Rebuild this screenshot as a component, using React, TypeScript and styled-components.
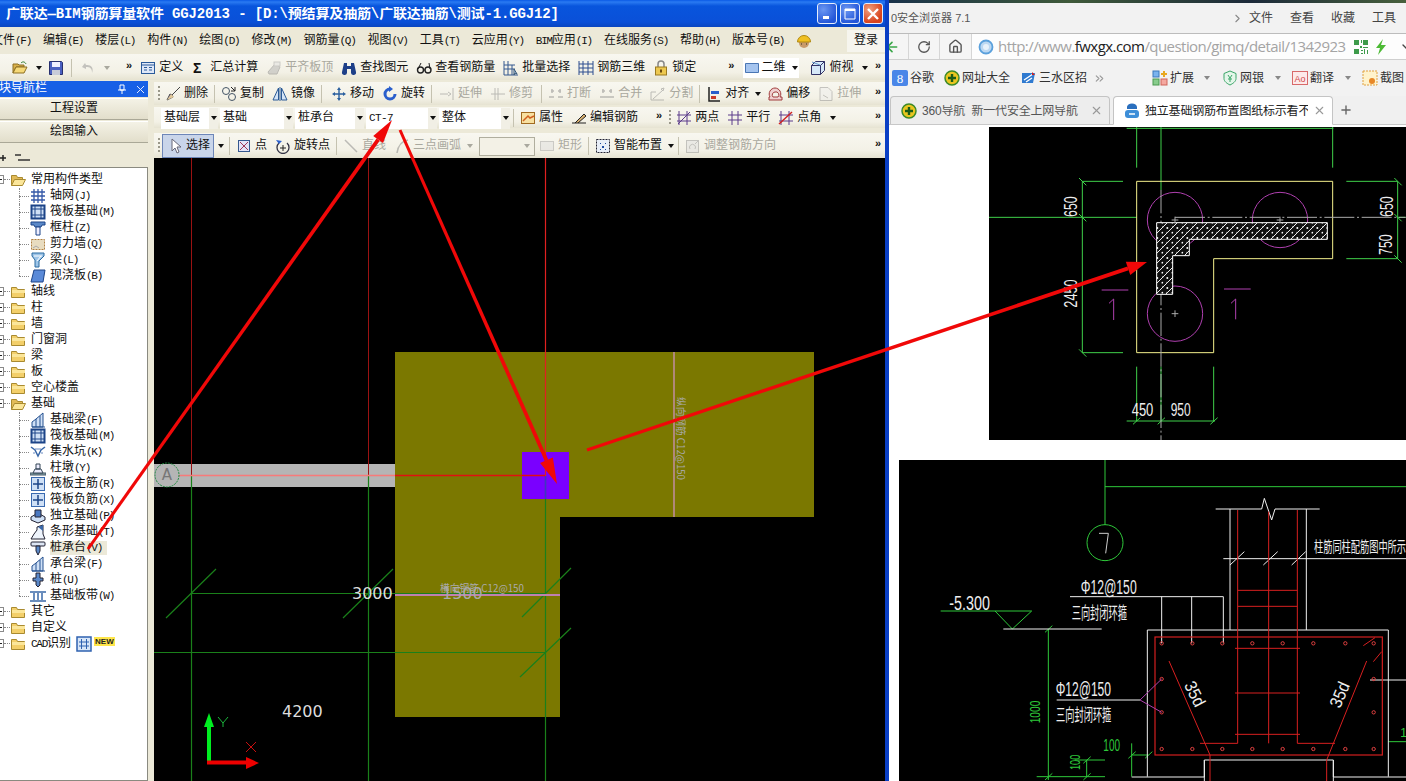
import React, { ReactNode } from "react";
import styled, { createGlobalStyle } from "styled-components";
import { ArrowLeft, RotateCw, House, ChevronDown, ChevronRight, ChevronsRight, X, Plus } from "lucide-react";

const Global = createGlobalStyle`
  html, body { margin: 0; padding: 0; overflow: hidden; background: #fff; }
  * { box-sizing: border-box; }
`;

const legacy = `"Liberation Mono", "Noto Sans CJK SC", monospace`;
const cjk = `"Liberation Sans", "Noto Sans CJK SC", sans-serif`;

const Desktop = styled.div`
  position: relative; width: 1406px; height: 781px; display: flex; overflow: hidden;
`;

/* ------- legacy window -------- */
const Win = styled.div`
  width: 889px; height: 781px; display: flex; flex-direction: column; flex: none;
  background: #ece9d8; border-right: 4px solid #0a3fc4; font: 12px/1 ${legacy}; color: #111; overflow: hidden;
`;
const TitleBar = styled.div`
  height: 27px; flex: none; display: flex; align-items: center; padding: 0 1px 0 6px;
  background: linear-gradient(#0a5ae6 0, #2a7af2 2px, #0855dd 6px, #0a50d8 22px, #0a46c0 100%);
`;
const TitleText = styled.div`
  flex: 1; color: #fff; font-size: 14px; font-weight: 700; letter-spacing: -0.14px; white-space: pre; overflow: hidden;
`;
const WinBtns = styled.div`display: flex; gap: 3px; margin-right: 1px;`;
const WinBtn = styled.div<{ $red?: boolean }>`
  width: 20px; height: 21px; border: 1px solid #e6eefc; border-radius: 3px;
  background: ${p => (p.$red ? "radial-gradient(circle at 30% 30%, #f0a080, #d8431c 70%)" : "radial-gradient(circle at 30% 30%, #6b97f2, #2356d8 75%)")};
  display: flex; align-items: center; justify-content: center;
`;
const MenuBar = styled.div`
  height: 27px; flex: none; display: flex; align-items: center; gap: 12px; margin-left: -9px; padding-top: 1px; background: #ece9d8;
`;
const MenuItem = styled.div`white-space: nowrap; display: flex; align-items: center;`;
const K = styled.span`font-size: 11px; letter-spacing: -1.25px;`;
const LoginBox = styled.div`
  margin-left: auto; width: 38px; height: 22px; background: #f6f5ee; display: flex; align-items: center; justify-content: center;
`;
const Bar = styled.div<{ $h: number; $mt?: number }>`
  height: ${p => p.$h}px; margin-top: ${p => p.$mt ?? 0}px; flex: none; display: flex; align-items: center; gap: 8px; white-space: nowrap; padding-top: 1px;
  background: linear-gradient(#f8f7f0, #f3f1e6 70%, #e6e3d2);
`;
const ToolItem = styled.div<{ $off?: boolean; $ml?: number }>`
  display: flex; align-items: center; gap: 3px; flex: none; margin-left: ${p => p.$ml ?? 0}px;
  color: ${p => (p.$off ? "#a9a89e" : "#111")};
  svg { ${p => (p.$off ? "opacity: .45; filter: grayscale(1);" : "")} }
`;
const IconSvg = styled.svg`width: 16px; height: 16px; flex: none; display: block;`;
const Sep = styled.div<{ $ml?: number }>`
  width: 1px; height: 18px; background: #c5c2b0; flex: none; margin: 0 -2px 0 ${p => p.$ml ?? -2}px;
`;
const Handle = styled.div<{ $ml?: number }>`
  width: 2px; height: 16px; flex: none; margin-left: ${p => p.$ml ?? 4}px; margin-right: -3px;
  background: repeating-linear-gradient(#9a988a 0 2px, transparent 2px 4px);
`;
const More = styled.span<{ $auto?: boolean; $ml?: number }>`
  font: 700 11px/1 "Liberation Sans", sans-serif; color: #111; margin-top: -5px; flex: none;
  margin-left: ${p => (p.$auto ? "auto" : `${p.$ml ?? 0}px`)}; margin-right: ${p => (p.$auto ? "4px" : "0")};
`;
const Caret = styled.span<{ $off?: boolean; $ml?: number; $mr?: number }>`
  width: 0; height: 0; flex: none; border: 3px solid transparent; border-top: 4px solid ${p => (p.$off ? "#a9a89e" : "#111")}; border-bottom: 0;
  margin-left: ${p => p.$ml ?? -2}px; margin-right: ${p => p.$mr ?? -2}px;
`;
const ViewBox = styled.div`
  height: 20px; width: 56px; background: #fff; display: flex; align-items: center; gap: 1px; margin-left: 1px; padding-left: 1px; flex: none;
`;
const SelectRow = styled.div`display: flex; gap: 2px; margin-left: 7px; flex: none;`;
const Select = styled.div<{ $w: number }>`
  width: ${p => p.$w}px; height: 21px; background: #fff; display: flex; align-items: center; justify-content: space-between; padding-left: 3px;
`;
const SelectArrow = styled.div`
  width: 9px; height: 21px; background: #f1efe5; display: flex; align-items: center; justify-content: center;
`;
const SmallLatin = styled.span`font-size: 11px; letter-spacing: -.6px;`;
const ActiveTool = styled.div`
  display: flex; align-items: center; gap: 2px; flex: none; height: 24px; width: 52px; margin-left: -3px; padding-left: 5px;
  background: #c9d5ea; border: 1px solid #6d86b8;
`;
const DisabledSelect = styled.div`
  width: 56px; height: 19px; border: 1px solid #b0ae9e; background: #f3f1e6; display: flex; align-items: center; justify-content: flex-end; padding-right: 4px; flex: none;
`;

const Body = styled.div`flex: 1; display: flex; min-height: 0;`;
const Side = styled.div`
  width: 148px; margin: 1px 6px 0 0; flex: none; display: flex; flex-direction: column;
`;
const PanelHead = styled.div`
  height: 16px; background: #1760e6; color: #fff; display: flex; align-items: center; justify-content: space-between; padding-right: 3px; flex: none;
`;
const HeadLabel = styled.span`margin-left: -1px;`;
const HeadIcons = styled.div`display: flex; gap: 9px; align-items: center;`;
const NavBtn = styled.div<{ $mt: number }>`
  height: 22px; margin-top: ${p => p.$mt}px; flex: none; display: flex; align-items: center; justify-content: center;
  background: linear-gradient(#f4f2e6, #e2decb); border-bottom: 1px solid #aaa897; border-top: 1px solid #fff;
`;
const TreeTools = styled.div`
  height: 24px; flex: none; display: flex; align-items: flex-end; padding-bottom: 5px; background: #ece9d8;
`;
const Tree = styled.div`
  flex: 1; background: #fff; border: 1px solid #8a8a80; border-left: 0; padding-top: 4px; overflow: hidden;
`;
const FolderRow = styled.div`
  height: 16px; display: flex; align-items: center; position: relative; padding-left: 10px; gap: 5px; white-space: nowrap;
`;
const Expander = styled.span`
  position: absolute; left: -5px; top: 3px; width: 9px; height: 9px; border: 1px solid #8a8a8a; background: #fff;
  &::after { content: ""; position: absolute; left: 1px; right: 1px; top: 3px; height: 1px; background: #222; }
  &::before { content: ""; position: absolute; left: 8px; width: 6px; top: 3px; border-top: 1px dotted #888; }
`;
const Leaf = styled.div`
  height: 16px; display: flex; align-items: center; position: relative; padding-left: 30px; gap: 4px; white-space: nowrap;
  &::before { content: ""; position: absolute; left: 19px; width: 10px; top: 8px; border-top: 1px dotted #888; }
  &::after { content: ""; position: absolute; left: 19px; top: 0; height: 16px; border-left: 1px dotted #888; }
  &:last-child::after { height: 8px; }
`;
const LeafText = styled.span<{ $sel?: boolean }>`
  background: ${p => (p.$sel ? "#ece9d8" : "transparent")}; padding: 1px 0; ${p => (p.$sel ? "padding-right: 5px; margin-right: -5px;" : "")}
`;
const NewBadge = styled.span`
  font: 700 8px/9px "Liberation Sans", sans-serif; background: #ffe64a; color: #222; padding: 0 1px; margin-left: -3px; margin-top: -6px;
`;
const Main = styled.div`flex: 1; min-width: 0; display: flex; flex-direction: column;`;
const CanvasSvg = styled.svg`display: block; width: 731px; height: 623px; flex: none; background: #000;`;

/* ------- browser -------- */
const Browser = styled.div`
  flex: 1; min-width: 0; height: 781px; display: flex; flex-direction: column; background: #fff; font: 12px/1 ${cjk}; color: #333; overflow: hidden;
`;
const Strip = styled.div`height: 3px; flex: none; background: linear-gradient(90deg, #19324a, #3f5a3a 35%, #1c2a3a 70%, #47603c);`;
const BrTitle = styled.div`
  height: 31px; flex: none; background: #f2f2f2; border-bottom: 1px solid #bcbcbc; display: flex; align-items: center; padding: 0 10px 0 2px; color: #555; white-space: pre;
  font-size: 11px;
`;
const BrMenu = styled.div`margin-left: auto; display: flex; gap: 17px; align-items: center; font-size: 12px; color: #444;`;
const BrNav = styled.div`
  height: 26px; flex: none; background: #f5f5f5; border-bottom: 1px solid #cfcfcf; display: flex; align-items: center; color: #555;
`;
const NavCell = styled.div<{ $w: number }>`
  width: ${p => p.$w}px; height: 100%; flex: none; display: flex; align-items: center; justify-content: center; border-right: 1px solid #d6d6d6;
`;
const UrlBox = styled.div`
  flex: 1; min-width: 0; height: 100%; display: flex; align-items: center; padding-left: 6px; gap: 4px; background: #fdfdfd; overflow: hidden;
`;
const UrlText = styled.div`font: 15px/1 "Open Sans", "Liberation Sans", sans-serif; color: #a4a4a4; white-space: nowrap; letter-spacing: -.55px; width: 351px; flex: none;`;
const Domain = styled.span`color: #222;`;
const BookBar = styled.div`
  height: 36px; flex: none; background: #f2f2f2; display: flex; align-items: center; padding-left: 3px; white-space: nowrap;
`;
const Book = styled.div<{ $ml?: number }>`display: flex; align-items: center; gap: 2px; margin-left: ${p => p.$ml ?? 0}px; flex: none;`;
const BookCaret = styled.span<{ $ml: number }>`
  width: 0; height: 0; border: 3px solid transparent; border-top: 4px solid #888; border-bottom: 0; margin-left: ${p => p.$ml}px; flex: none;
`;
const TabBar = styled.div`
  height: 29px; flex: none; background: #f0f0f0; border-bottom: 1px solid #c8c8c8; display: flex; align-items: flex-end; padding-left: 1px; gap: 3px;
`;
const Tab = styled.div<{ $on?: boolean }>`
  width: 220px; height: ${p => (p.$on ? 29 : 28)}px; flex: none; display: flex; align-items: center; padding: 0 6px 0 10px; gap: 5px; white-space: nowrap; overflow: hidden;
  background: ${p => (p.$on ? "#fff" : "#ededed")}; color: ${p => (p.$on ? "#222" : "#555")};
  border: 1px solid #c4c4c4; border-bottom: ${p => (p.$on ? "1px solid #fff" : "0")}; border-radius: 4px 4px 0 0;
  margin-bottom: ${p => (p.$on ? -1 : 0)}px;
`;
const TabLabel = styled.span`flex: 1; min-width: 0; overflow: hidden; letter-spacing: -.2px;`;
const Content = styled.div`flex: 1; min-height: 0; background: #fff; padding-top: 2px;`;
const Drawing = styled.svg<{ $w: number; $h: number; $ml: number; $mt?: number }>`
  display: block; width: ${p => p.$w}px; height: ${p => p.$h}px; margin: ${p => p.$mt ?? 0}px 0 0 ${p => p.$ml}px; background: #000;
`;
const Overlay = styled.svg`position: absolute; inset: 0; width: 1406px; height: 781px; pointer-events: none;`;

/* ------- icons -------- */
const g: Record<string, ReactNode> = {
  open: <><path d="M1 13V4h5l1 1h5v2H4L1 13z" fill="#d9b04a" stroke="#8d6f22" /><path d="M1 13l3-6h11l-3 6z" fill="#f6d978" stroke="#8d6f22" /><path d="M9 3c2-2 4-1 5 1" fill="none" stroke="#2a7a2a" /></>,
  save: <><path d="M1.5 1.5h12l1 1v12h-13z" fill="#4a5fc0" stroke="#28306e" /><rect x="4" y="2" width="8" height="5" fill="#eef" /><rect x="4" y="10" width="8" height="5" fill="#c8ccd8" /></>,
  undo: <path d="M5 3L2 7l4 2V7c4 0 6 1 6 6 2-6-1-8-6-8z" fill="#888" />,
  define: <><rect x="1.5" y="2.5" width="13" height="11" fill="#dfe8f8" stroke="#2a5a9a" /><path d="M1.5 5h13M4 7.5h3M4 10h3M9 7.5h3M9 10h3" stroke="#2a5a9a" /></>,
  sigma: <text x="2" y="13" fontSize="14" fontWeight="700" fontFamily="Liberation Sans" fill="#111">Σ</text>,
  flush: <><path d="M2 12l7-8 5 3-3 7H3z" fill="#aaa" stroke="#777" /><rect x="8" y="2" width="6" height="4" fill="#ddd" stroke="#999" /></>,
  binoc: <path d="M3 3h3v3h4V3h3l2 9a2.500 2.500 0 0 1-5 1V9H6v4a2.500 2.500 0 0 1-5-1z" fill="#1d3f88" />,
  glasses: <><circle cx="4.500" cy="10" r="3" fill="none" stroke="#222" strokeWidth="1.400" /><circle cx="12" cy="10" r="3" fill="none" stroke="#222" strokeWidth="1.400" /><path d="M7.500 10h1.500M2 9l3-6M14 9l-1-6" stroke="#222" fill="none" /></>,
  batch: <><path d="M1 1v14h14M1 5h11M1 9h11M5 1v14M9 5v10" stroke="#35588f" fill="none" /><path d="M11 9l3 5-2-1-1 2z" fill="#cde" stroke="#357" /></>,
  rebar3: <path d="M1 1v14M15 1v14M5 1v14M10 1v14M1 4h14M1 8h14M1 12h14" stroke="#2c4d8f" strokeWidth="1" fill="none" />,
  lock: <><path d="M5 7V4a3 3 0 0 1 6 0v3" fill="none" stroke="#888" strokeWidth="1.500" /><rect x="2.500" y="7" width="11" height="8" fill="#edc850" stroke="#9a7a20" /><rect x="7" y="9.500" width="2" height="3" fill="#6a4a10" /></>,
  plane: <path d="M1.500 3.500h13v9h-13z" fill="#a5c4ef" stroke="#4a76b4" />,
  cube: <><path d="M1.500 5.500l4-4h9v9l-4 4h-9z" fill="#d6e8f8" stroke="#336" /><path d="M1.500 5.500h9v9M10.500 5.500l4-4" fill="none" stroke="#336" /><path d="M2 2l8 3" stroke="#69c" /></>,
  del: <><path d="M15 1L7 9l-2-1-3 6 6-3-1-2z" fill="#7a6ab8" stroke="#444" /><path d="M2 14l4-6 3 3z" fill="#e0c898" /></>,
  copy: <><circle cx="5" cy="5" r="3.500" fill="none" stroke="#456" /><circle cx="11" cy="11" r="3.500" fill="none" stroke="#456" /><path d="M10 1l4 4M14 1v4h-4" stroke="#222" fill="none" /></>,
  mirror: <><path d="M6.500 2L1 14h5.500zM9.500 2L15 14H9.500z" fill="#d4e4f6" stroke="#2a5a96" /><path d="M8 1v14" stroke="#2a5a96" /></>,
  move: <path d="M8 1l2 3H8.700v3.300H12V6l3 2-3 2V8.700H8.700V12H10l-2 3-2-3h1.300V8.700H4V10L1 8l3-2v1.300h3.300V4H6z" fill="#2a5f9e" />,
  rotate: <><path d="M13 8a5 5 0 1 1-5-5" fill="none" stroke="#2a5fcc" strokeWidth="3" /><path d="M7 0l4 3-4 3z" fill="#2a5fcc" /></>,
  extend: <path d="M1 8h8M9 6l3 2-3 2M14 2v12" stroke="#777" fill="none" />,
  trim: <path d="M1 8h14M8 2v12M5 2v12" stroke="#777" fill="none" />,
  brk: <path d="M1 11h5M10 11h5M3 5h3M10 5h3M4 3v4M12 3v4" stroke="#777" strokeWidth="1.500" fill="none" />,
  merge: <path d="M1 11h14M3 5h3M10 5h3M4 3v4M12 3v4" stroke="#777" strokeWidth="1.500" fill="none" />,
  split: <path d="M1 14V6h5M1 14h13M3 13l10-9M14 2l-3 1 2 2z" stroke="#777" fill="none" />,
  align: <><path d="M3 1v14h11" stroke="#222" fill="none" strokeWidth="1.500" /><rect x="5" y="5" width="8" height="3" fill="#2a5fcc" /><rect x="5" y="10" width="5" height="3" fill="#c83a2a" /></>,
  offset: <path d="M8 2a6 6 0 0 1 5 9h2v3H2v-3h1A6 6 0 0 1 8 2zm0 4a3 3 0 0 0-2 5h5a3 3 0 0 0-3-5z" fill="#f0d0d0" stroke="#a03a3a" />,
  stretch: <><path d="M2 1.500h8l4 4v9H2z" fill="#eee" stroke="#888" /><path d="M5 9l5 3" stroke="#888" /></>,
  attr: <><rect x="1.500" y="2.500" width="13" height="11" fill="#f8e0a0" stroke="#a06a20" /><path d="M3 11l5-5 2 2 4-2" stroke="#d06020" fill="none" strokeWidth="1.500" /></>,
  edit: <path d="M1 13h14M4 13l9-9 2 2-8 7" stroke="#222" fill="#d8b070" />,
  two: <path d="M3 1v14M11 1v14M1 5h14M1 11h14M2 14L14 2" stroke="#5a3a8a" fill="none" />,
  para: <path d="M5 1v14M11 1v14M1 5h14M1 10h14" stroke="#5a3a8a" fill="none" />,
  angle: <><path d="M3 1v14M11 1v14M1 5h14M1 11h14" stroke="#5a3a8a" fill="none" /><path d="M1 14L14 2" stroke="#d02020" strokeWidth="1.400" /></>,
  cursor: <path d="M4 1v12l3-3 2 5 2-1-2-5h4z" fill="#fff" stroke="#667" />,
  point: <><rect x="2.500" y="2.500" width="11" height="11" fill="#e4e4f8" stroke="#35588f" /><path d="M4 4l8 8M12 4l-8 8" stroke="#a03a5a" /></>,
  rotpt: <><path d="M4 5a6 6 0 1 0 8 0" fill="none" stroke="#334" strokeWidth="1.300" /><path d="M1 2l3 4 3-3z" fill="#2a5fcc" /><path d="M8 7v6M5 10h6" stroke="#222" /></>,
  line: <path d="M2 2l12 12" stroke="#777" strokeWidth="1.500" />,
  arc: <path d="M3 15C4 8 8 3 14 2" fill="none" stroke="#777" strokeWidth="1.500" />,
  rect: <rect x="1.500" y="3.500" width="13" height="9" fill="#ddd" stroke="#999" />,
  smart: <><rect x="1.500" y="1.500" width="13" height="13" fill="#e8eef8" stroke="#223" strokeDasharray="2 1" /><path d="M5 5h1v1H5zM10 5h1v1h-1zM7 8h2v2H7zM5 11h1v1H5zM10 11h1v1h-1z" fill="#1c4aa0" /></>,
  adjust: <><rect x="1.500" y="2.500" width="12" height="12" fill="#ddd" stroke="#888" /><path d="M5 11a3 3 0 1 1 5 0M10 6l3-3" stroke="#888" fill="none" /></>,
  folder: <><path d="M1.500 13.500v-10h5l1 2h7v8z" fill="#f3cf6a" stroke="#a98a30" /><path d="M2 6h13v3H2z" fill="#fbe69a" /></>,
  folderOpen: <><path d="M1.500 13.500v-10h5l1 2h5v2" fill="#e2bb58" stroke="#a98a30" /><path d="M1.500 13.500l3-6h11l-3 6z" fill="#fbe69a" stroke="#a98a30" /></>,
  grid: <path d="M4 1v14M8 1v14M12 1v14M1 4h14M1 8h14M1 12h14" stroke="#3458a8" strokeWidth="1.300" fill="none" />,
  raft: <><rect x="1.500" y="1.500" width="13" height="13" fill="#cfe0f6" stroke="#1c4488" strokeWidth="2" /><path d="M5 1v14M11 1v14M1 5h14M1 11h14" stroke="#1c4488" /></>,
  col: <><path d="M1 2h14v3h-3l-1 2H5L4 5H1z" fill="#5a88c8" stroke="#1c4488" /><path d="M6 7h4v8H6z" fill="#eef" stroke="#1c4488" /></>,
  wall: <><rect x="1.500" y="3.500" width="13" height="10" fill="#e8dcc0" stroke="#b08040" strokeDasharray="2 1" /><path d="M3 12l3-2 3 2" stroke="#aaa" fill="none" /></>,
  beam: <><path d="M2 1h12v3L9 9v6H5V8L2 4z" fill="#9cc4e8" stroke="#2a6aa0" /><path d="M4 4l8 0M7 9l4-5" stroke="#fff" /></>,
  slab: <path d="M4 2h11l-2 12H1z" fill="#5a8ad8" stroke="#1c4488" />,
  fbeam: <><path d="M2 15V10l4-3 7-6v14z" fill="#cfe0f6" stroke="#24508f" /><path d="M6 7v8M10 4v11" stroke="#24508f" /><path d="M2 15h13" stroke="#24508f" /></>,
  pit: <><path d="M1 3l4 3 3 6 3-6 4-3" fill="none" stroke="#3a68a8" strokeWidth="1.500" /><path d="M5 5h6M3 9h2M11 9h2" stroke="#6a8ac0" /></>,
  pier: <><path d="M0 13h16v2H0z" fill="#8aa" stroke="#456" /><path d="M3 13l2-4h6l2 4zM6 9V4h4v5z" fill="#eef" stroke="#345" /></>,
  main: <><rect x="1.500" y="1.500" width="13" height="13" fill="#cfe0f6" stroke="#3a6ab0" /><path d="M8 3v10M3 8h10" stroke="#1c4488" strokeWidth="1.500" /></>,
  ind: <><path d="M1 9l7-4 7 4v3l-7 3-7-3z" fill="#cfe0f6" stroke="#223" /><path d="M5 2h6v7H5z" fill="#4a78c0" stroke="#223" /></>,
  strip: <><path d="M1 15l3-5 3-4V3l6-2v9l2 5z" fill="#eef4fc" stroke="#223" /><path d="M8 3l5-2v6z" fill="#3a68a8" /></>,
  cap: <><rect x="1" y="2" width="14" height="4" rx="1" fill="#dde6f4" stroke="#223" /><path d="M6 6h4v5l-2 4-2-4z" fill="#5a88c8" stroke="#223" /></>,
  pile: <><path d="M6 1h4v5h3v3h-3v4l-2 2-2-2V9H3V6h3z" fill="#5a88c8" stroke="#223" /></>,
  band: <><path d="M0 4h16M0 13h16" stroke="#3a68a8" strokeWidth="1.600" /><path d="M4 5v7M8 5v7M12 5v7" stroke="#3a68a8" strokeWidth="1.500" /></>,
  cad: <><rect x="1" y="1" width="14" height="14" fill="#d7e6f8" stroke="#2f62b0" strokeWidth="1.500" /><path d="M5.500 3v10M10.500 3v10M3 6h10M3 10h10" stroke="#2f62b0" /></>,
  hat: <><circle cx="8" cy="10" r="5" fill="#c89a6a" /><path d="M1.500 9a6.500 6.500 0 0 1 13 0z" fill="#f0c020" stroke="#b08810" /><path d="M5 11h1M10 11h1" stroke="#332" /></>,
  q360: <><circle cx="8" cy="8" r="7" fill="#e9c620" stroke="#3c8a28" strokeWidth="1.500" /><path d="M8 4v8M4 8h8" stroke="#1a5c16" strokeWidth="2.400" /></>,
  tabq: <><path d="M3 4a5 3.500 0 0 1 10 0v2H3z" fill="#2a6fbe" /><rect x="1" y="7" width="14" height="8" rx="3" fill="#3d8ed8" /><path d="M5 11h6" stroke="#fff" strokeWidth="1.400" /></>,
  ext: <><rect x="1" y="1" width="6" height="6" fill="#7ab3ee" stroke="#3a78bc" /><rect x="1" y="9" width="6" height="6" fill="#88cc8c" stroke="#4a9a50" /><rect x="9" y="9" width="6" height="6" fill="#f4a8a0" stroke="#d0645a" /><path d="M12 1v6M9 4h6" stroke="#e8a820" strokeWidth="2" /></>,
  bank: <><path d="M8 1l6 2.500v5c0 3-3 5-6 6.500-3-1.500-6-3.500-6-6.500v-5z" fill="#e4f6ea" stroke="#3aa668" /><path d="M6 5l2 3 2-3M6 9h4M8 8v4" stroke="#3aa668" fill="none" /></>,
  cut: <><rect x="1" y="1" width="14" height="14" fill="#fff3cc" stroke="#e0a040" strokeDasharray="2 1" /><circle cx="10" cy="11" r="3" fill="#e88828" /></>,
  sanshui: <><path d="M1 3h13l-2 10H1z" fill="#2f7ad0" /><path d="M3 10l9-6M5 12l6-4" stroke="#fff" strokeWidth="1.400" /><path d="M11 2l3 3-3 0z" fill="#d02020" /></>,
  globe: <><circle cx="8" cy="8" r="6.500" fill="#bcd8f2" stroke="#5aa0dc" strokeWidth="1.800" /><circle cx="8" cy="8" r="3" fill="#e8f2fb" /></>,
  qr: <path d="M1 1h5v5H1zM10 1h5v5h-5zM1 10h5v5H1zM8 1h1v3H8zM7 7h2v2H7zM10 8h5v1h-5zM11 10h1v5h-1zM14 11h1v4h-1zM8 11h2v1H8zM8 14h2v1H8z" fill="#3d9a4a" />,
  bolt: <path d="M10 0L3 9h4l-2 7 8-10H8z" fill="#4cba34" />,
  google: <><rect width="16" height="16" rx="2" fill="#4a86e8" /><text x="8" y="13" textAnchor="middle" fontSize="13" fill="#fff" fontFamily="Liberation Serif">8</text></>,
  ao: <><rect x=".5" y="1.500" width="15" height="13" fill="#fdeaea" stroke="#d86a6a" /><text x="8" y="11.500" textAnchor="middle" fontSize="9" fill="#d04a4a" fontFamily="Liberation Sans">Ao</text></>,
};
const Ico: React.FC<{ n: string }> = ({ n }) => <IconSvg viewBox="0 0 16 16">{g[n]}</IconSvg>;

const Tool: React.FC<{ i: string; t: string; off?: boolean; ml?: number }> = ({ i, t, off, ml }) => (
  <ToolItem $off={off} $ml={ml}><Ico n={i} /><span>{t}</span></ToolItem>
);

const menus: [string, string][] = [["文件", "(F)"], ["编辑", "(E)"], ["楼层", "(L)"], ["构件", "(N)"], ["绘图", "(D)"], ["修改", "(M)"], ["钢筋量", "(Q)"], ["视图", "(V)"], ["工具", "(T)"], ["云应用", "(Y)"]];
const menus2: [string, string][] = [["在线服务", "(S)"], ["帮助", "(H)"], ["版本号", "(B)"]];

type LeafT = [string, string, string];
type Folder = { t: ReactNode; kids?: LeafT[]; extra?: boolean };
const tree: Folder[] = [
  { t: "常用构件类型", kids: [["grid", "轴网", "(J)"], ["raft", "筏板基础", "(M)"], ["col", "框柱", "(Z)"], ["wall", "剪力墙", "(Q)"], ["beam", "梁", "(L)"], ["slab", "现浇板", "(B)"]] },
  { t: "轴线" }, { t: "柱" }, { t: "墙" }, { t: "门窗洞" }, { t: "梁" }, { t: "板" }, { t: "空心楼盖" },
  { t: "基础", kids: [["fbeam", "基础梁", "(F)"], ["raft", "筏板基础", "(M)"], ["pit", "集水坑", "(K)"], ["pier", "柱墩", "(Y)"], ["main", "筏板主筋", "(R)"], ["main", "筏板负筋", "(X)"], ["ind", "独立基础", "(P)"], ["strip", "条形基础", "(T)"], ["cap", "桩承台", "(V)"], ["fbeam", "承台梁", "(F)"], ["pile", "桩", "(U)"], ["band", "基础板带", "(W)"]] },
  { t: "其它" }, { t: "自定义" },
  { t: <><K>CAD</K>识别</>, extra: true },
];

const Arrow: React.FC<{ a: number[]; len?: number; w?: number }> = ({ a, len = 20, w = 6 }) => {
  const [x1, y1, x2, y2] = a;
  const L = Math.hypot(x2 - x1, y2 - y1);
  const ux = (x2 - x1) / L, uy = (y2 - y1) / L;
  const bx = x2 - ux * len, by = y2 - uy * len;
  return (
    <g fill="#f00808" stroke="none">
      <polygon points={`${x1 - uy * 1.5},${y1 + ux * 1.5} ${bx - uy * 1.9},${by + ux * 1.9} ${bx + uy * 1.9},${by - ux * 1.9} ${x1 + uy * 1.5},${y1 - ux * 1.5}`} />
      <polygon points={`${x2},${y2} ${bx - uy * w},${by + ux * w} ${bx + uy * w},${by - ux * w}`} />
    </g>
  );
};

const Canvas = () => (
  <CanvasSvg viewBox="154 158 731 623">
    <path d="M395 352H814V517H560V717H395z" fill="#7b7800" />
    <path d="M154 464H395V487H154z" fill="#b5b5b5" />
    <rect x="522" y="452" width="47" height="47" fill="#7a00ff" />
    <g stroke="#1a801a" strokeWidth="1.200" fill="none">
      <path d="M191.500 476V781M368.500 476V781M545.500 476V781" />
      <path d="M191 593.500H545M154 652.500H545" />
      <path d="M166 618L216 569M343 618L393 569M522 617L571 568M520 677L571 628" />
    </g>
    <g stroke="#9a1212" strokeWidth="1"><path d="M191.500 158V476M368.500 158V476" /></g>
    <path d="M545.500 158V476" stroke="#e02020" strokeWidth="1.200" />
    <path d="M545.500 499V476" stroke="#3a3ac0" strokeWidth="1.200" />
    <path d="M179 475.500H395" stroke="#f87a7a" strokeWidth="1.400" /><path d="M395 475.500H545" stroke="#e01010" strokeWidth="1.400" />
    <circle cx="167" cy="475" r="12" fill="none" stroke="#1c8a3c" strokeDasharray="2 1" />
    <text x="167" y="480" textAnchor="middle" fontSize="15" fill="#777" fontFamily="DejaVu Sans">A</text>
    <path d="M395 595H560" stroke="#c080b0" strokeWidth="2" />
    <path d="M674 352V517" stroke="#b08878" strokeWidth="2" />
    <text x="0" y="0" transform="translate(677,397) rotate(90)" fontSize="10" fill="#a8a8a8" fontFamily="Noto Sans CJK SC" textLength="83" lengthAdjust="spacingAndGlyphs">纵向钢筋 C12@150</text>
    <text x="352" y="599" fontSize="16" fill="#ddd" fontFamily="DejaVu Sans">3000</text>
    <text x="442" y="599" fontSize="16" fill="#aaa" fontFamily="DejaVu Sans">1500</text>
    <text x="440" y="592" fontSize="10" fill="#aaa" fontFamily="Noto Sans CJK SC" textLength="84" lengthAdjust="spacingAndGlyphs">横向钢筋 C12@150</text>
    <text x="282" y="717" fontSize="16" fill="#ddd" fontFamily="DejaVu Sans">4200</text>
    <path d="M209 762V722" stroke="#00ee20" strokeWidth="4" /><path d="M209 713L214 727H204z" fill="#00ee20" />
    <path d="M207 762.500H246" stroke="#ee0000" strokeWidth="4" /><path d="M259 763L246 757V769z" fill="#ee0000" />
    <path d="M218 717L223 723L228 717M223 723V727" stroke="#1bb53c" fill="none" />
    <path d="M246 742L256 752M256 742L246 752" stroke="#c81010" fill="none" />
  </CanvasSvg>
);

const T: React.FC<{ x: number; y: number; len: number; s?: number; rot?: number; c?: string; children: ReactNode }> = ({ x, y, len, s = 56, rot = 0, c = "#eee", children }) => (
  <text transform={`translate(${x},${y}) rotate(${rot})`} textAnchor="start" fontSize={s} fill={c} fontFamily={"Liberation Sans, Noto Sans CJK SC, sans-serif"} textLength={len} lengthAdjust="spacingAndGlyphs">{children}</text>
);

const Plan = () => (
  <Drawing $w={417} $h={313} $ml={100} viewBox="12 6 1251 939">
    <defs>
      <pattern id="h" width="30" height="30" patternUnits="userSpaceOnUse">
        <rect width="30" height="30" fill="#111" />
        <path d="M0 30L30 0" stroke="#eee" strokeWidth="3" />
        <circle cx="7" cy="9" r="3" fill="#fff" /><circle cx="22" cy="23" r="2.500" fill="#fff" /><circle cx="24" cy="5" r="2" fill="#ddd" /><circle cx="6" cy="22" r="2" fill="#ddd" />
      </pattern>
    </defs>
    <g stroke="#3fd04a" strokeWidth="3" fill="none">
      <path d="M425 10H1045M455 5V128M528 5V195M1043 5V128" />
      <path d="M12 277H455M292 169V683M282 159L304 181M282 267L304 289M282 673L304 695M292 169H414M292 683H414" />
      <path d="M1238 169V401M1084 169H1238M1084 401H1238M1228 159L1250 181M1228 267L1250 289M1228 391L1250 413M1238 277H1262" />
      <path d="M425 888H690M455 725V888M528 725V888M686 725V888M444 898L466 878M518 898L540 878M676 898L698 878" />
    </g>
    <path d="M455 169H1043V401H686V683H455z" fill="none" stroke="#f4f08c" strokeWidth="3" />
    <g stroke="#b040b0" strokeWidth="3" fill="none">
      <circle cx="570" cy="285" r="83" /><circle cx="885" cy="285" r="83" /><circle cx="570" cy="566" r="83" />
      <path d="M350 495H430M386 522V585M386 522L372 535M717 492H797M752 522V583M752 522L738 535" />
    </g>
    <path d="M528 195V945" stroke="#aaa" strokeWidth="3" strokeDasharray="70 8 6 8" />
    <path d="M570 277H1262" stroke="#aaa" strokeWidth="3" strokeDasharray="90 8 6 8" />
    <path d="M515 293H1027V343H613V392H563V508H515z" fill="url(#h)" stroke="#fff" strokeWidth="3" />
    <path d="M560 285H580M570 275V295M875 285H895M885 275V295M560 566H580M570 556V576" stroke="#aaa" strokeWidth="3" />
    <T x={277} y={276} len={62} rot={-90}>650</T>
    <T x={277} y={548} len={85} rot={-90}>2450</T>
    <T x={1224} y={276} len={62} rot={-90}>650</T>
    <T x={1222} y={390} len={62} rot={-90}>750</T>
    <T x={440} y={872} len={65}>450</T>
    <T x={557} y={872} len={60}>950</T>
  </Drawing>
);

const Section = () => {
  const dotsX = [800, 892, 982, 1072, 1163, 1255, 1351, 1436];
  return (
    <Drawing $w={507} $h={321} $ml={10} $mt={20} viewBox="12 15 1521 963">
      <g stroke="#2ec83a" strokeWidth="3" fill="none">
        <path d="M630 15V210M630 95H1533" />
        <circle cx="630" cy="263" r="54" />
        <path d="M137 468H410M300 468L352 522L410 468M460 522V975M425 965H630M540 915H630M575 915V965M710 865V965M710 900H760M1480 860H1533" />
        <path d="M450 532L472 512M450 975L472 955M565 925L587 905M565 975L587 955M700 910L722 890M750 910L772 890" />
      </g>
      <path d="M612 235L640 235L632 295" fill="none" stroke="#ccc" strokeWidth="3" />
      <g stroke="#f0f0f0" strokeWidth="3" fill="none">
        <path d="M962 162H1100L1108 130L1130 195L1140 162H1274M1005 162V525M1234 162V525" />
        <path d="M985 311H1533" />
        <path d="M1005 330L1048 290M1105 330L1148 290M1190 330L1232 290" />
        <path d="M525 425H985M800 425V565M890 425V565M985 425V565M485 735H735" />
        <path d="M325 522H620M757 525H1480V965M757 525V965" />
        <path d="M710 966H928V915H1315V966H1533M928 915V978M1315 915V978" />
        <path d="M1425 675H1533" />
      </g>
      <g stroke="#d82020" strokeWidth="3" fill="none">
        <rect x="780" y="546" width="682" height="354" strokeWidth="3.500" />
        <path d="M1028 165V865M1207 165V865M1121 170V865" />
        <path d="M1028 406H1207M1028 454H1207M1020 580H1215M1020 714H1215M1020 838H1215" />
        <path d="M915 865H1028M1207 865H1320M822 618L945 900V978M1415 618L1295 915V978" />
        <path d="M1405 572L1440 548M1435 620L1460 590" />
      </g>
      <g fill="none" stroke="#e04040" strokeWidth="3">
        {dotsX.map(x => <circle key={x} cx={x} cy={565} r={5} />)}
        {dotsX.map(x => <circle key={x} cx={x} cy={882} r={5} />)}
        <circle cx={800} cy={672} r={5} /><circle cx={800} cy={772} r={5} /><circle cx={1436} cy={672} r={5} /><circle cx={1436} cy={772} r={5} />
      </g>
      <path d="M800 672L735 735L800 772" fill="none" stroke="#b040b0" strokeWidth="3" />
      <T x={1257} y={292} len={276} s={46}>柱筋同柱配筋图中所示</T>
      <T x={557} y={417} len={168} s={62}>Φ12@150</T>
      <T x={530} y={492} len={166} s={50}>三向封闭环箍</T>
      <T x={482} y={722} len={166} s={62}>Φ12@150</T>
      <T x={483} y={797} len={166} s={50}>三向封闭环箍</T>
      <T x={163} y={465} len={122} s={60}>-5.300</T>
      <T x={436} y={805} len={68} s={44} rot={-90} c="#2ec83a">1000</T>
      <T x={625} y={887} len={50} s={50} c="#2ec83a">100</T>
      <T x={555} y={945} len={46} s={42} rot={-90} c="#2ec83a">100</T>
      <T x={866} y={690} len={78} s={52} rot={63}>35d</T>
      <T x={1335} y={762} len={78} s={52} rot={-67}>35d</T>
      <T x={1516} y={845} len={20} s={40} c="#2ec83a">1</T>
    </Drawing>
  );
};

export default function App() {
  return (
    <Desktop>
      <Global />
      <Win>
        <TitleBar>
          <TitleText>广联达—BIM钢筋算量软件 GGJ2013 - [D:\预结算及抽筋\广联达抽筋\测试-1.GGJ12]</TitleText>
          <WinBtns>
            <WinBtn><svg width="12" height="12" viewBox="0 0 12 12"><rect x="2" y="8" width="6" height="3" fill="#fff" /></svg></WinBtn>
            <WinBtn><svg width="14" height="14" viewBox="0 0 14 14"><path d="M2 2h10v10H2z" fill="none" stroke="#fff" /><path d="M2 3h10" stroke="#fff" strokeWidth="2" /></svg></WinBtn>
            <WinBtn $red><svg width="14" height="14" viewBox="0 0 14 14"><path d="M2 2l10 10M12 2L2 12" stroke="#fff" strokeWidth="2.400" /></svg></WinBtn>
          </WinBtns>
        </TitleBar>
        <MenuBar>
          {menus.map(([a, b]) => <MenuItem key={a}>{a}<K>{b}</K></MenuItem>)}
          <MenuItem><K>BIM</K>应用<K>(I)</K></MenuItem>
          {menus2.map(([a, b]) => <MenuItem key={a}>{a}<K>{b}</K></MenuItem>)}
          <Ico n="hat" />
          <LoginBox>登录</LoginBox>
        </MenuBar>
        <Bar $h={26}>
          <ToolItem $ml={12}><Ico n="open" /></ToolItem><Caret $ml={0} $mr={0} />
          <ToolItem $ml={-2}><Ico n="save" /></ToolItem>
          <Sep $ml={-1} />
          <ToolItem $ml={2} $off><Ico n="undo" /></ToolItem><Caret $off $ml={0} $mr={0} />
          <More $ml={8}>»</More>
          <Tool i="define" t="定义" />
          <Tool i="sigma" t="汇总计算" />
          <Tool i="flush" t="平齐板顶" off />
          <Tool i="binoc" t="查找图元" />
          <Tool i="glasses" t="查看钢筋量" />
          <Tool i="batch" t="批量选择" />
          <Tool i="rebar3" t="钢筋三维" />
          <Tool i="lock" t="锁定" />
          <More $ml={24}>»</More>
          <ViewBox><Ico n="plane" /><span>二维</span><Caret $ml={6} /></ViewBox>
          <Tool i="cube" t="俯视" ml={3} />
          <Caret $ml={1} />
          <More $auto>»</More>
        </Bar>
        <Body>
          <Side>
            <PanelHead>
              <HeadLabel>块导航栏</HeadLabel>
              <HeadIcons>
                <svg width="10" height="11" viewBox="0 0 10 11"><path d="M3 1h4v5H3zM1 6h8M5 6v4" stroke="#fff" fill="none" /></svg>
                <svg width="9" height="9" viewBox="0 0 9 9"><path d="M1 1l7 7M8 1L1 8" stroke="#dfe8ff" /></svg>
              </HeadIcons>
            </PanelHead>
            <NavBtn $mt={1}>工程设置</NavBtn>
            <NavBtn $mt={1}>绘图输入</NavBtn>
            <TreeTools>
              <svg width="32" height="8" viewBox="0 0 32 8"><path d="M0 4h6M3 1v6" stroke="#222" strokeWidth="1.500" /><path d="M15 1h6M18 6h12" stroke="#333" strokeWidth="1.600" /></svg>
            </TreeTools>
            <Tree>
              {tree.map((f, idx) => (
                <React.Fragment key={idx}>
                  <FolderRow>
                    <Expander />
                    <Ico n={f.kids ? "folderOpen" : "folder"} />
                    <span>{f.t}</span>
                    {f.extra && <><Ico n="cad" /><NewBadge>NEW</NewBadge></>}
                  </FolderRow>
                  {f.kids && (
                    <div>
                      {f.kids.map(([i, t, k], j) => (
                        <Leaf key={j}><Ico n={i} /><LeafText $sel={t === "桩承台"}>{t}<K>{k}</K></LeafText></Leaf>
                      ))}
                    </div>
                  )}
                </React.Fragment>
              ))}
            </Tree>
          </Side>
          <Main>
            <Bar $h={23} $mt={2}>
              <Handle />
              <Tool i="del" t="删除" />
              <Sep /><Tool i="copy" t="复制" /><Tool i="mirror" t="镜像" />
              <Sep /><Tool i="move" t="移动" ml={3} /><Tool i="rotate" t="旋转" />
              <Sep /><Tool i="extend" t="延伸" off ml={1} /><Tool i="trim" t="修剪" off />
              <Sep $ml={0} /><Tool i="brk" t="打断" off /><Tool i="merge" t="合并" off /><Tool i="split" t="分割" off />
              <Sep /><Tool i="align" t="对齐" /><Caret /><Tool i="offset" t="偏移" /><Tool i="stretch" t="拉伸" off />
              <More $auto>»</More>
            </Bar>
            <Bar $h={21} $mt={2}>
              <SelectRow>
                <Select $w={57}><span>基础层</span><SelectArrow><Caret $ml={0} $mr={0} /></SelectArrow></Select>
                <Select $w={73}><span>基础</span><SelectArrow><Caret $ml={0} $mr={0} /></SelectArrow></Select>
                <Select $w={69}><span>桩承台</span><SelectArrow><Caret $ml={0} $mr={0} /></SelectArrow></Select>
                <Select $w={71}><SmallLatin>CT-7</SmallLatin><SelectArrow><Caret $ml={0} $mr={0} /></SelectArrow></Select>
                <Select $w={71}><span>整体</span><SelectArrow><Caret $ml={0} $mr={0} /></SelectArrow></Select>
              </SelectRow>
              <Sep $ml={-5} />
              <Tool i="attr" t="属性" />
              <Tool i="edit" t="编辑钢筋" />
              <More $ml={10}>»</More>
              <Handle $ml={-1} />
              <Tool i="two" t="两点" />
              <Tool i="para" t="平行" />
              <Tool i="angle" t="点角" />
              <Caret $ml={1} />
              <More $auto>»</More>
            </Bar>
            <Bar $h={25} $mt={5}>
              <Handle />
              <ActiveTool><Ico n="cursor" /><span>选择</span></ActiveTool>
              <Caret $ml={-4} />
              <Sep $ml={-1} />
              <Tool i="point" t="点" />
              <Tool i="rotpt" t="旋转点" />
              <Sep />
              <Tool i="line" t="直线" off />
              <Tool i="arc" t="三点画弧" off />
              <Caret $off />
              <DisabledSelect><Caret $off $ml={0} $mr={0} /></DisabledSelect>
              <Tool i="rect" t="矩形" off ml={-4} />
              <Sep />
              <Tool i="smart" t="智能布置" />
              <Caret />
              <Sep />
              <Tool i="adjust" t="调整钢筋方向" off />
              <More $auto>»</More>
            </Bar>
            <Canvas />
          </Main>
        </Body>
      </Win>

      <Browser>
        <Strip />
        <BrTitle>
          <span>0安全浏览器 7.1</span>
          <BrMenu>
            <ChevronRight size={13} color="#888" style={{ marginRight: -12 }} />
            <span>文件</span><span>查看</span><span>收藏</span><span>工具</span>
          </BrMenu>
        </BrTitle>
        <BrNav>
          <NavCell $w={20} style={{ justifyContent: "flex-start" }}><ArrowLeft size={16} color="#3aa648" style={{ marginLeft: -5 }} strokeWidth={2.400} /></NavCell>
          <NavCell $w={31}><RotateCw size={14} color="#555" strokeWidth={2.200} /></NavCell>
          <NavCell $w={32}><House size={15} color="#555" strokeWidth={2.200} /></NavCell>
          <UrlBox>
            <Ico n="globe" />
            <UrlText>http://www.<Domain>fwxgx.com</Domain>/question/gimq/detail/1342923</UrlText>
            <Ico n="qr" />
            <Ico n="bolt" />
            <ChevronDown size={16} color="#444" style={{ marginLeft: 6, flex: "none" }} />
          </UrlBox>
        </BrNav>
        <BookBar>
          <Book><Ico n="google" /><span>谷歌</span></Book>
          <Book $ml={10}><Ico n="q360" /><span>网址大全</span></Book>
          <Book $ml={11}><Ico n="sanshui" /><span>三水区招</span></Book>
          <ChevronsRight size={13} color="#999" style={{ marginLeft: 6, flex: "none" }} />
          <Book $ml={46}><Ico n="ext" /><span>扩展</span></Book>
          <BookCaret $ml={10} />
          <Book $ml={12}><Ico n="bank" /><span>网银</span></Book>
          <BookCaret $ml={11} />
          <Book $ml={11}><Ico n="ao" /><span>翻译</span></Book>
          <BookCaret $ml={11} />
          <Book $ml={11}><Ico n="cut" /><span>截图</span></Book>
        </BookBar>
        <TabBar>
          <Tab><Ico n="q360" /><TabLabel>360导航_新一代安全上网导航</TabLabel><X size={13} color="#999" /></Tab>
          <Tab $on><Ico n="tabq" /><TabLabel>独立基础钢筋布置图纸标示看不</TabLabel><X size={13} color="#999" /></Tab>
          <Plus size={14} color="#666" strokeWidth={2.400} style={{ marginLeft: 3, marginBottom: 7 }} />
        </TabBar>
        <Content>
          <Plan />
          <Section />
        </Content>
      </Browser>

      <Overlay viewBox="0 0 1406 781">
        <Arrow a={[88, 549, 392, 120]} len={24} w={6} />
        <Arrow a={[400, 130, 557, 484]} len={26} w={7} />
        <Arrow a={[587, 450, 1147, 262]} len={20} w={7} />
      </Overlay>
    </Desktop>
  );
}
